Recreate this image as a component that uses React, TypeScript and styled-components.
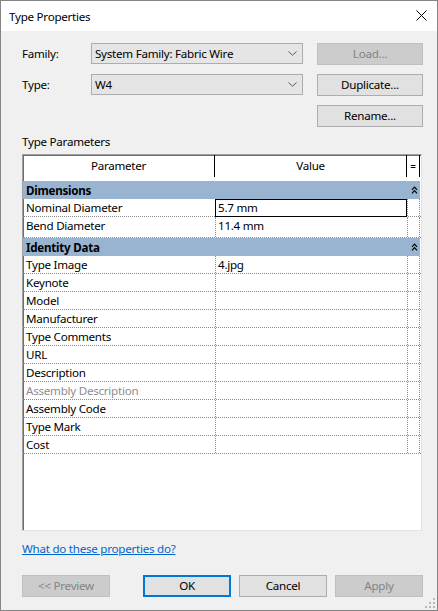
import React from "react";
import styled, { createGlobalStyle, css } from "styled-components";

const FONT = `"Noto Sans", "Open Sans", sans-serif`;
const SIZE = "11.6px";
const TRACK = "-0.25px";

const GlobalStyle = createGlobalStyle`
  html, body { margin: 0; padding: 0; background: #ffffff; }
  body { font-family: ${FONT}; font-size: ${SIZE}; letter-spacing: ${TRACK}; color: #000; }
  * { box-sizing: border-box; }
`;

const Window = styled.div`
  position: relative;
  width: 438px;
  height: 611px;
  border: 1px solid #858585;
  background: #f0f0f0;
  display: flex;
  flex-direction: column;
  font-family: ${FONT};
  font-size: ${SIZE};
  letter-spacing: ${TRACK};
`;

const TitleBar = styled.div`
  height: 30px;
  background: #ffffff;
  display: flex;
  align-items: center;
  justify-content: space-between;
  padding: 0 10px 0 8px;
`;

const CloseBox = styled.div`
  width: 12px;
  height: 12px;
  display: flex;
  align-items: center;
  justify-content: center;
  margin-top: -1px;
`;

const Body = styled.div`
  flex: 1;
  display: flex;
  flex-direction: column;
  padding: 12px 14px 0 21px;
`;

const TopGrid = styled.div`
  display: grid;
  grid-template-columns: 69px 226px 106px;
  grid-template-rows: 22px 22px 22px;
  row-gap: 9px;
  align-items: center;
`;

const Label = styled.div`
  line-height: 16px;
`;

const Combo = styled.div`
  width: 212px;
  height: 21px;
  border: 1px solid #adadad;
  background: #e5e5e5;
  display: flex;
  align-items: center;
  justify-content: space-between;
  padding: 0 5px 0 3px;
  margin-top: -1px;
`;

const Button = styled.button<{ $w: number; $disabled?: boolean; $default?: boolean }>`
  width: ${(p) => p.$w}px;
  height: 22px;
  margin: 0;
  padding: 0 0 1px;
  font-family: ${FONT};
  font-size: ${SIZE};
  letter-spacing: ${TRACK};
  border: 1px solid #adadad;
  background: #e1e1e1;
  color: #000;
  ${(p) =>
    p.$disabled &&
    css`
      background: #cccccc;
      border-color: #bfbfbf;
      color: #838383;
    `}
  ${(p) =>
    p.$default &&
    css`
      border-color: #0078d7;
      box-shadow: inset 0 0 0 1px #0078d7;
    `}
`;

const SectionLabel = styled.div`
  margin-top: 7px;
  line-height: 16px;
`;

const Grid = styled.div`
  margin-top: 4px;
  width: 400px;
  height: 377px;
  border: 1px solid;
  border-color: #a0a0a0 #e3e3e3 #e3e3e3 #a0a0a0;
  box-shadow: inset 1px 1px 0 #6d6d6d;
  background: #ffffff;
  display: flex;
  flex-direction: column;
`;

const COLS = "192px 192px 13px";

const HeaderRow = styled.div`
  display: grid;
  grid-template-columns: ${COLS};
  height: 22px;
  margin-bottom: 4px;
`;

const HeaderCell = styled.div<{ $eq?: boolean }>`
  display: flex;
  align-items: center;
  justify-content: center;
  border-right: 1px solid #000;
  font-size: ${(p) => (p.$eq ? "10px" : SIZE)};
  padding-bottom: 1px;
`;

const GroupBand = styled.div`
  height: 18px;
  background: #99b4d1;
  display: flex;
  align-items: center;
  justify-content: space-between;
  font-weight: bold;
  padding-left: 3px;
  width: 397px;
`;

const ChevronBox = styled.div`
  width: 13px;
  display: flex;
  justify-content: center;
  padding-left: 1px;
`;

const Row = styled.div<{ $extra?: number }>`
  display: grid;
  grid-template-columns: ${COLS};
  height: ${(p) => 18 + (p.$extra ?? 0)}px;
  border-bottom: 1px dotted #8a8a8a;
`;

const Cell = styled.div<{ $kind: "param" | "value" | "eq"; $dim?: boolean; $editing?: boolean }>`
  line-height: 17px;
  white-space: nowrap;
  overflow: hidden;
  color: ${(p) => (p.$dim ? "#8d8d8d" : "#000")};
  padding-left: ${(p) => (p.$kind === "param" ? "3px" : "2px")};
  border-left: ${(p) => (p.$kind === "param" ? "none" : "1px dotted #8a8a8a")};
  border-right: ${(p) => (p.$kind === "eq" ? "1px dotted #8a8a8a" : "none")};
  ${(p) =>
    p.$editing &&
    css`
      outline: 1px solid #000;
      outline-offset: -1px;
      margin-bottom: -1px;
      position: relative;
    `}
`;

const Link = styled.a`
  margin-top: 10px;
  line-height: 16px;
  color: #0066cc;
  text-decoration: underline;
  align-self: flex-start;
  cursor: pointer;
`;

const ButtonBar = styled.div`
  margin-top: 18px;
  display: flex;
  justify-content: space-between;
  width: 401px;
`;

const ButtonGroup = styled.div`
  display: flex;
  gap: 8px;
`;

const Grip = styled.div`
  position: absolute;
  right: 2px;
  bottom: 2px;
  width: 10px;
  height: 10px;
  display: flex;
`;

const Chevron = () => (
  <svg width="9" height="5" viewBox="0 0 9 5">
    <path d="M0.5 0.5 L4.5 4.2 L8.5 0.5" fill="none" stroke="#555" strokeWidth="1" />
  </svg>
);

const DoubleUp = () => (
  <svg width="7" height="8" viewBox="0 0 7 8">
    <path d="M1 3.8 L3.5 1.2 L6 3.8 M1 7.3 L3.5 4.7 L6 7.3" fill="none" stroke="#000" strokeWidth="1.2" />
  </svg>
);

const CloseIcon = () => (
  <svg width="11" height="11" viewBox="0 0 11 11">
    <path d="M0.5 0.5 L10.5 10.5 M10.5 0.5 L0.5 10.5" stroke="#000" strokeWidth="1" />
  </svg>
);

const GripIcon = () => (
  <svg width="10" height="10" viewBox="0 0 10 10">
    {[
      [8, 0],
      [4, 4],
      [8, 4],
      [0, 8],
      [4, 8],
      [8, 8],
    ].map(([x, y], i) => (
      <rect key={i} x={x} y={y} width="2" height="2" fill="#b8b8b8" />
    ))}
  </svg>
);

type P = { p: string; v?: string; editing?: boolean; dim?: boolean; extra?: number };

const groups: { name: string; rows: P[] }[] = [
  {
    name: "Dimensions",
    rows: [
      { p: "Nominal Diameter", v: "5.7 mm", editing: true },
      { p: "Bend Diameter", v: "11.4 mm", extra: 3 },
    ],
  },
  {
    name: "Identity Data",
    rows: [
      { p: "Type Image", v: "4.jpg" },
      { p: "Keynote" },
      { p: "Model" },
      { p: "Manufacturer" },
      { p: "Type Comments" },
      { p: "URL" },
      { p: "Description" },
      { p: "Assembly Description", dim: true },
      { p: "Assembly Code" },
      { p: "Type Mark" },
      { p: "Cost" },
    ],
  },
];

export default function App() {
  return (
    <>
      <GlobalStyle />
      <Window>
        <TitleBar>
          <span>Type Properties</span>
          <CloseBox>
            <CloseIcon />
          </CloseBox>
        </TitleBar>
        <Body>
          <TopGrid>
            <Label>Family:</Label>
            <Combo>
              <span>System Family: Fabric Wire</span>
              <Chevron />
            </Combo>
            <Button $w={106} $disabled>
              Load...
            </Button>
            <Label>Type:</Label>
            <Combo>
              <span>W4</span>
              <Chevron />
            </Combo>
            <Button $w={106}>Duplicate...</Button>
            <span />
            <span />
            <Button $w={106}>Rename...</Button>
          </TopGrid>

          <SectionLabel>Type Parameters</SectionLabel>
          <Grid>
            <HeaderRow>
              <HeaderCell>Parameter</HeaderCell>
              <HeaderCell>Value</HeaderCell>
              <HeaderCell $eq>=</HeaderCell>
            </HeaderRow>
            {groups.map((g) => (
              <React.Fragment key={g.name}>
                <GroupBand>
                  <span>{g.name}</span>
                  <ChevronBox>
                    <DoubleUp />
                  </ChevronBox>
                </GroupBand>
                {g.rows.map((r) => (
                  <Row key={r.p} $extra={r.extra}>
                    <Cell $kind="param" $dim={r.dim}>
                      {r.p}
                    </Cell>
                    <Cell $kind="value" $editing={r.editing}>
                      {r.v ?? ""}
                    </Cell>
                    <Cell $kind="eq" />
                  </Row>
                ))}
              </React.Fragment>
            ))}
          </Grid>

          <Link>What do these properties do?</Link>

          <ButtonBar>
            <Button $w={88} $disabled>
              {"<< Preview"}
            </Button>
            <ButtonGroup>
              <Button $w={88} $default>
                OK
              </Button>
              <Button $w={88}>Cancel</Button>
              <Button $w={88} $disabled>
                Apply
              </Button>
            </ButtonGroup>
          </ButtonBar>
        </Body>
        <Grip>
          <GripIcon />
        </Grip>
      </Window>
    </>
  );
}
